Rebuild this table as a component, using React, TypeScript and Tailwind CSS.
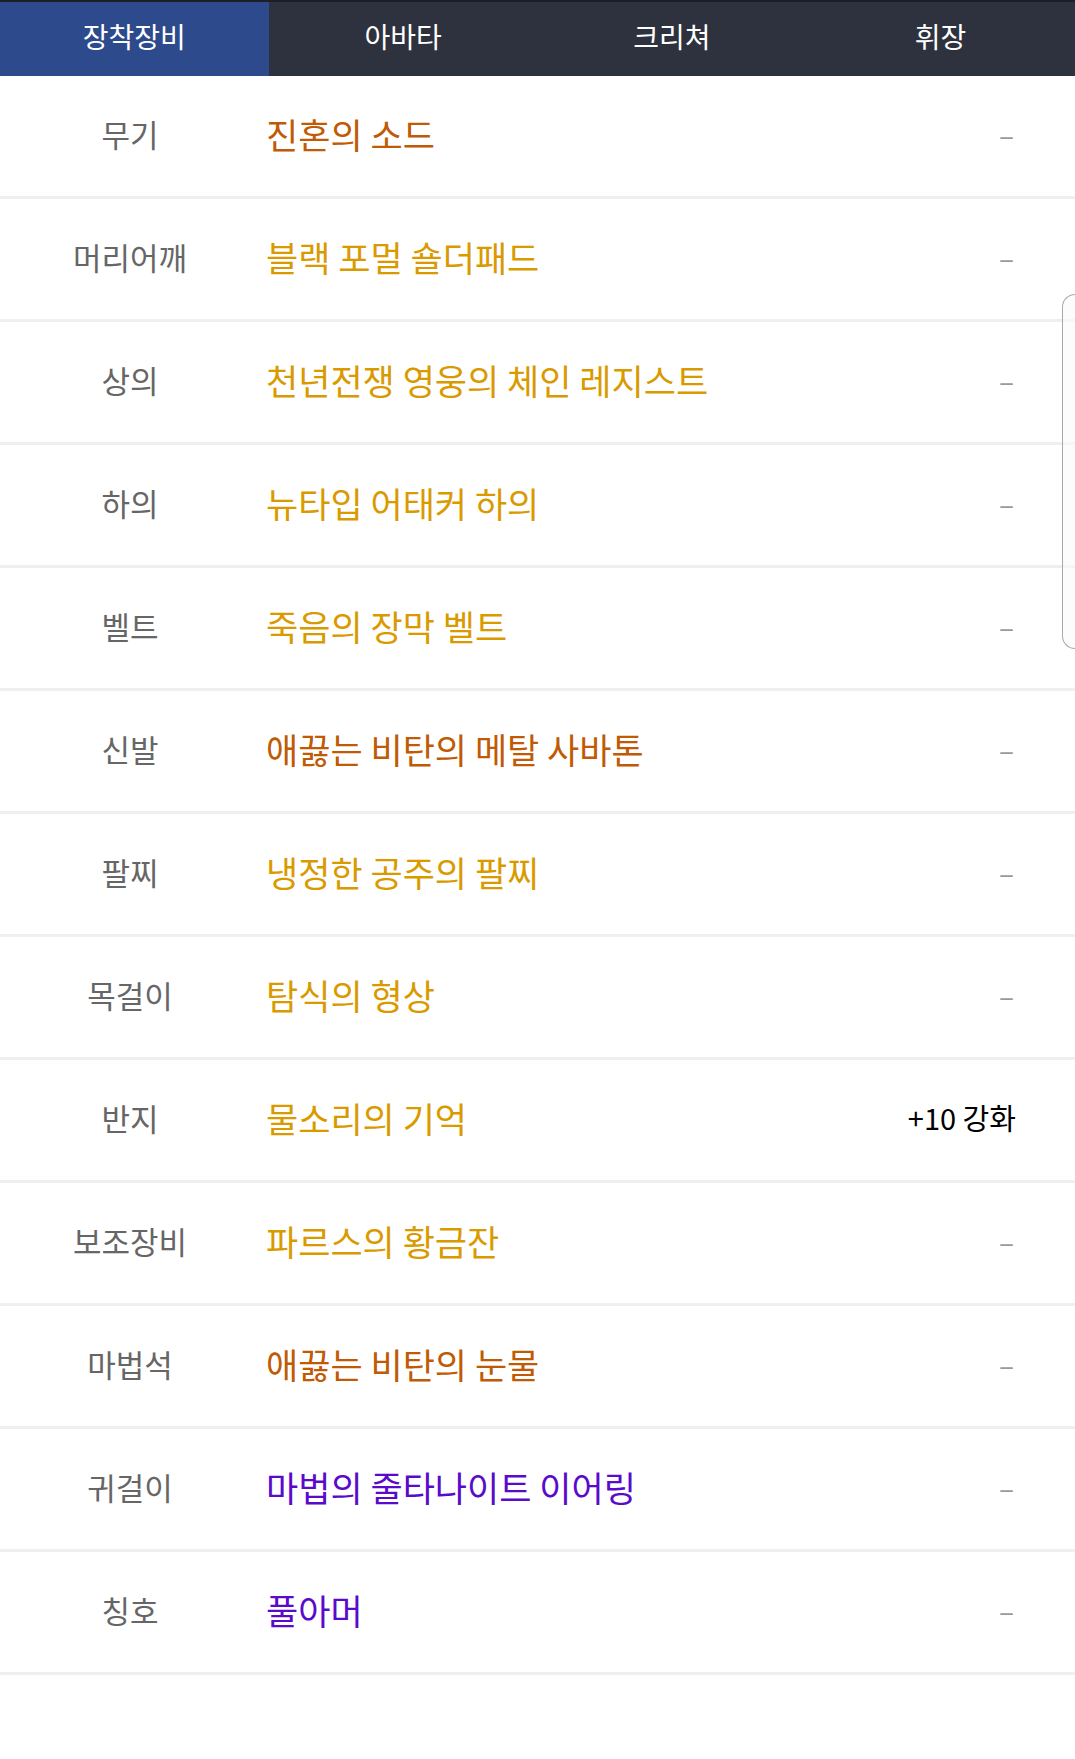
import React from 'react'

const tabs = ['장착장비', '아바타', '크리쳐', '휘장']

const LEGEND = 'text-[#c05a04]'
const UNIQUE = 'text-[#d99a00]'
const EPIC = 'text-[#5a0acb]'

const items: { slot: string; name: string; color: string; extra?: string }[] = [
  { slot: '무기', name: '진혼의 소드', color: LEGEND },
  { slot: '머리어깨', name: '블랙 포멀 숄더패드', color: UNIQUE },
  { slot: '상의', name: '천년전쟁 영웅의 체인 레지스트', color: UNIQUE },
  { slot: '하의', name: '뉴타입 어태커 하의', color: UNIQUE },
  { slot: '벨트', name: '죽음의 장막 벨트', color: UNIQUE },
  { slot: '신발', name: '애끓는 비탄의 메탈 사바톤', color: LEGEND },
  { slot: '팔찌', name: '냉정한 공주의 팔찌', color: UNIQUE },
  { slot: '목걸이', name: '탐식의 형상', color: UNIQUE },
  { slot: '반지', name: '물소리의 기억', color: UNIQUE, extra: '+10 강화' },
  { slot: '보조장비', name: '파르스의 황금잔', color: UNIQUE },
  { slot: '마법석', name: '애끓는 비탄의 눈물', color: LEGEND },
  { slot: '귀걸이', name: '마법의 줄타나이트 이어링', color: EPIC },
  { slot: '칭호', name: '풀아머', color: EPIC },
]

export default function App() {
  return (
    <main
      className="relative min-h-[1759px] w-[1075px] bg-white"
      style={{ fontFamily: '"Noto Sans CJK KR", "Noto Sans", sans-serif' }}
    >
      {/* tabs */}
      <nav className="grid h-[76px] grid-cols-4 border-t-2 border-[#1c1f27] bg-[#2d323e]">
        {tabs.map((t, i) => (
          <div
            key={t}
            className={`flex items-center justify-center pb-[7px] text-[28px] leading-none text-white ${
              i === 0 ? 'bg-[#2d4b8c]' : ''
            }`}
          >
            {t}
          </div>
        ))}
      </nav>

      <ul>
        {items.map((it) => (
          <li key={it.slot} className="flex h-[123px] items-center border-b-[3px] border-[#efefef] pb-1">
            <span className="w-[260px] text-center text-[31px] text-[#666666]">{it.slot}</span>
            <span className={`ml-[6px] flex-1 text-[35px] ${it.color}`}>{it.name}</span>
            {it.extra ? (
              <span className="mr-[59px] text-[29px] text-black">{it.extra}</span>
            ) : (
              <span className="mr-[61px] text-[28px] text-[#999999]">–</span>
            )}
          </li>
        ))}
      </ul>

      {/* side pull handle */}
      <div className="absolute right-0 top-[294px] h-[355px] w-[13px] rounded-l-[14px] border border-r-0 border-[#a8a8a8] bg-[#fafafa]/60" />
    </main>
  )
}
